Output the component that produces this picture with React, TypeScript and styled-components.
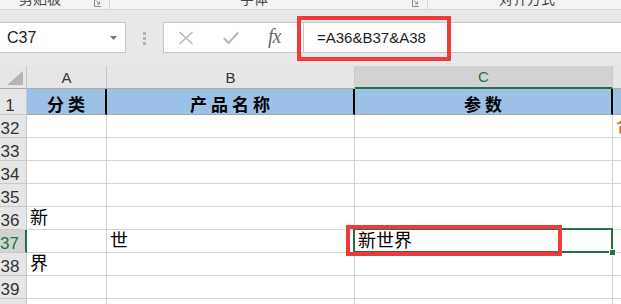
import React from 'react';
import styled, { createGlobalStyle } from 'styled-components';

const GlobalStyle = createGlobalStyle`
    html, body {
        margin: 0;
        padding: 0;
        background: #ffffff;
        overflow: hidden;
    }
`;

const UI_FONT = `"Liberation Sans", Arial, sans-serif`;
const CJK_FONT = `"Liberation Sans", "Noto Sans CJK SC", sans-serif`;
const GREEN = '#217346';
const RED = '#ee3a3a';
const GRID = '#d4d4d4';

/**
 * * ribbon strip (group labels, cut off at the top)
 */
const Window = styled.div`
    width: 621px;
    height: 304px;
    overflow: hidden;
    background: #e8e8e8;
    font-family: ${UI_FONT};
`;

const Ribbon = styled.div`
    display: flex;
    height: 9px;
    background: #f3f3f3;
    border-bottom: 1px solid #d6d6d6;
    overflow: hidden;
`;

const RibbonGroup = styled.div<{ $w: number }>`
    display: flex;
    align-items: flex-end;
    flex: 0 0 ${p => p.$w}px;
    box-sizing: border-box;
    border-right: 1px solid #d6d6d6;
    height: 9px;
`;

const RibbonLabel = styled.span<{ $w: number }>`
    width: ${p => p.$w}px;
    text-align: center;
    font-family: ${CJK_FONT};
    font-size: 14px;
    line-height: 14px;
    color: #444;
    margin-bottom: 3px;
    white-space: nowrap;
`;

const Launcher = styled.svg`
    margin-left: auto;
    margin-right: 8px;
    align-self: flex-start;
`;

/**
 * * formula bar
 */
const FormulaBar = styled.div`
    display: flex;
    align-items: flex-start;
    height: 56px;
    box-sizing: border-box;
    padding-top: 12px;
`;

const NameBox = styled.div`
    display: flex;
    align-items: center;
    justify-content: space-between;
    width: 127px;
    height: 31px;
    margin-left: -1px;
    box-sizing: border-box;
    border: 1px solid #c6c6c6;
    background: #fff;
    padding: 0 8px 0 7px;
    font-size: 16px;
    color: #1e1e1e;
`;

const Grip = styled.div`
    display: flex;
    flex-direction: column;
    align-items: center;
    gap: 2px;
    width: 37px;
    padding-top: 10px;
`;

const GripDot = styled.span`
    width: 3px;
    height: 3px;
    background: #b3b3b3;
`;

const FormulaBox = styled.div`
    display: flex;
    flex: 1;
    height: 31px;
    box-sizing: border-box;
    border: 1px solid #c6c6c6;
    border-right: none;
    background: #fff;
`;

const Actions = styled.div`
    display: flex;
    align-items: center;
    gap: 29px;
    width: 139px;
    padding-left: 14px;
    box-sizing: border-box;
`;

const ActionIcon = styled.svg`
    flex: 0 0 auto;
`;

const Fx = styled.span`
    font-family: "Liberation Serif", "Times New Roman", serif;
    font-style: italic;
    font-size: 20px;
    color: #6b6b6b;
    letter-spacing: -1px;
    margin-top: -2px;
`;

const FormulaInput = styled.div`
    position: relative;
    flex: 1;
    display: flex;
    align-items: center;
    border-left: 1px solid #c6c6c6;
    padding-left: 13px;
    font-size: 15px;
    color: #1e1e1e;
`;

const RedMark = styled.div<{ $l: number; $t: number; $w: number; $h: number }>`
    position: absolute;
    left: ${p => p.$l}px;
    top: ${p => p.$t}px;
    width: ${p => p.$w}px;
    height: ${p => p.$h}px;
    box-sizing: border-box;
    border: 4px solid ${RED};
    pointer-events: none;
    z-index: 3;
`;

/**
 * * sheet grid
 */
const Sheet = styled.div`
    display: grid;
    grid-template-columns: 27px 80px 248px 258px 1fr;
    grid-template-rows: 23px 26px;
    grid-auto-rows: 23px;
    background: #fff;
`;

const Corner = styled.div`
    display: flex;
    align-items: flex-end;
    justify-content: flex-end;
    padding: 0 3px 3px 0;
    background: #e6e6e6;
    border-right: 1px solid #c9c9c9;
    border-bottom: 1px solid #ababab;
`;

const ColHead = styled.div<{ $active?: boolean }>`
    display: flex;
    align-items: center;
    justify-content: center;
    background: ${p => (p.$active ? '#d2d2d2' : '#e6e6e6')};
    border-right: 1px solid #c9c9c9;
    border-bottom: ${p => (p.$active ? `2px solid ${GREEN}` : '1px solid #ababab')};
    color: ${p => (p.$active ? GREEN : '#333')};
    font-size: 15px;
    line-height: 15px;
`;

const RowHead = styled.div<{ $active?: boolean }>`
    display: flex;
    align-items: flex-end;
    justify-content: center;
    padding-right: 6px;
    box-sizing: border-box;
    background: ${p => (p.$active ? '#d2d2d2' : '#e6e6e6')};
    border-right: ${p => (p.$active ? `2px solid ${GREEN}` : '1px solid #c9c9c9')};
    border-bottom: 1px solid #c9c9c9;
    color: ${p => (p.$active ? GREEN : '#333')};
    font-size: 17px;
    line-height: 17px;
    overflow: hidden;
`;

const Cell = styled.div<{ $color?: string }>`
    position: relative;
    display: flex;
    align-items: flex-end;
    padding: 0 0 2px 3px;
    box-sizing: border-box;
    border-right: 1px solid ${GRID};
    border-bottom: 1px solid ${GRID};
    font-family: ${CJK_FONT};
    font-size: 18px;
    line-height: 18px;
    color: ${p => p.$color || '#000'};
    white-space: nowrap;
`;

const TitleCell = styled.div<{ $thick?: boolean }>`
    display: flex;
    align-items: flex-end;
    justify-content: center;
    padding-bottom: 2px;
    box-sizing: border-box;
    background: #9bc2e6;
    border-right: ${p => (p.$thick ? '2px solid #000' : `1px solid ${GRID}`)};
    border-bottom: 1px solid #a6a6a6;
    font-family: "Noto Sans CJK SC", sans-serif;
    font-weight: 700;
    font-size: 17px;
    line-height: 17px;
    color: #000;
`;

const TitleText = styled.span`
    letter-spacing: 4px;
    margin-right: -4px;
`;

const Selection = styled.div`
    position: absolute;
    left: -2px;
    top: -2px;
    right: -1px;
    bottom: -1px;
    border: 2px solid ${GREEN};
    pointer-events: none;
    z-index: 2;
`;

const FillHandle = styled.span`
    position: absolute;
    right: -5px;
    bottom: -5px;
    width: 5px;
    height: 5px;
    background: ${GREEN};
    border: 1px solid #fff;
`;

type RowType = {
    n: string
    a?: string
    b?: string
    c?: string
    d?: string
    active?: boolean
}

const rows: Array<RowType> = [
    { n: '32', d: '合' },
    { n: '33' },
    { n: '34' },
    { n: '35' },
    { n: '36', a: '新' },
    { n: '37', b: '世', c: '新世界', active: true },
    { n: '38', a: '界' },
    { n: '39' },
    { n: '40' },
];

const groups = [
    { w: 110, lw: 80, label: '剪贴板' },
    { w: 318, lw: 288, label: '字体' },
    { w: 200, lw: 198, label: '对齐方式' },
];

const App = () => {
    return (
        <Window>
            <GlobalStyle />
            <Ribbon>
                {groups.map(g => (
                    <RibbonGroup key={g.label} $w={g.w}>
                        <RibbonLabel $w={g.lw}>{g.label}</RibbonLabel>
                        {g.w < 300 || g.label === '字体' ? (
                            g.label !== '对齐方式' && (
                                <Launcher width="7" height="7" viewBox="0 0 7 7">
                                    <path d="M0.5 0 V6.5 H7" fill="none" stroke="#8a8a8a" />
                                    <path d="M2 0.5 L5.5 4 M5.5 1.5 V4 H3" fill="none" stroke="#8a8a8a" />
                                </Launcher>
                            )
                        ) : null}
                    </RibbonGroup>
                ))}
            </Ribbon>

            <FormulaBar>
                <NameBox>
                    <span>C37</span>
                    <svg width="7" height="4" viewBox="0 0 7 4">
                        <path d="M0 0 H7 L3.5 4 Z" fill="#777" />
                    </svg>
                </NameBox>
                <Grip>
                    <GripDot />
                    <GripDot />
                    <GripDot />
                </Grip>
                <FormulaBox>
                    <Actions>
                        <ActionIcon width="16" height="14" viewBox="0 0 16 14">
                            <path d="M1.5 1 L14.5 13 M14.5 1 L1.5 13" stroke="#b8b8b8" strokeWidth="1.6" />
                        </ActionIcon>
                        <ActionIcon width="16" height="14" viewBox="0 0 16 14">
                            <path d="M0.8 7 L5.5 12 L15.2 1.5" fill="none" stroke="#b8b8b8" strokeWidth="2" />
                        </ActionIcon>
                        <Fx>fx</Fx>
                    </Actions>
                    <FormulaInput>
                        =A36&amp;B37&amp;A38
                        <RedMark $l={-7} $t={-7} $w={154} $h={45} />
                    </FormulaInput>
                </FormulaBox>
            </FormulaBar>

            <Sheet>
                <Corner>
                    <svg width="16" height="14" viewBox="0 0 16 14">
                        <path d="M16 0 V14 H0 Z" fill="#b5b5b5" />
                    </svg>
                </Corner>
                <ColHead>A</ColHead>
                <ColHead>B</ColHead>
                <ColHead $active>C</ColHead>
                <ColHead />

                <RowHead>1</RowHead>
                <TitleCell $thick><TitleText>分类</TitleText></TitleCell>
                <TitleCell $thick><TitleText>产品名称</TitleText></TitleCell>
                <TitleCell $thick><TitleText>参数</TitleText></TitleCell>
                <TitleCell />

                {rows.map(r => (
                    <React.Fragment key={r.n}>
                        <RowHead $active={r.active}>{r.n}</RowHead>
                        <Cell>{r.a}</Cell>
                        <Cell>{r.b}</Cell>
                        <Cell>
                            {r.c}
                            {r.active && (
                                <>
                                    <Selection>
                                        <FillHandle />
                                    </Selection>
                                    <RedMark $l={-9} $t={-5} $w={216} $h={31} />
                                </>
                            )}
                        </Cell>
                        <Cell $color="#c55a11">{r.d}</Cell>
                    </React.Fragment>
                ))}
            </Sheet>
        </Window>
    );
};

export default App;
